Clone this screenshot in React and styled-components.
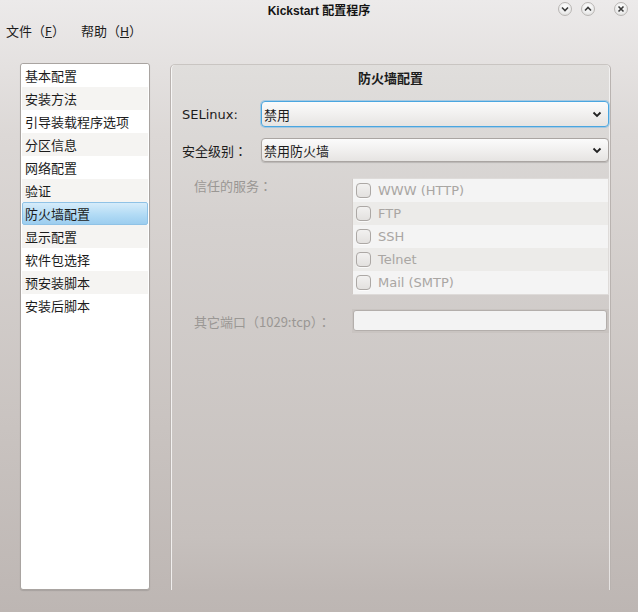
import React from 'react'
import styled, { createGlobalStyle } from 'styled-components'

const GlobalStyle = createGlobalStyle`
  html, body {
    margin: 0;
    padding: 0;
  }
  body {
    font-family: "DejaVu Sans", "Noto Sans CJK SC", sans-serif;
    font-size: 13px;
    color: #1c1c1c;
  }
`

const Window = styled.div`
  width: 638px;
  height: 612px;
  display: flex;
  flex-direction: column;
  background: linear-gradient(180deg, #eceaea 0%, #dcd8d6 22%, #c9c3c0 70%, #bdb6b3 100%);
  overflow: hidden;
`

const TitleBar = styled.div`
  height: 19px;
  display: flex;
  align-items: center;
  justify-content: center;
  position: relative;
  font-family: "Liberation Sans", "Noto Sans CJK SC", sans-serif;
  font-weight: bold;
  font-size: 12px;
  color: #141414;
`

const TitleButtons = styled.div`
  position: absolute;
  right: 10px;
  top: 2px;
  display: flex;
  gap: 9px;
`

const RoundButton = styled.div`
  width: 14px;
  height: 14px;
  border-radius: 50%;
  box-sizing: border-box;
  border: 1px solid #b9b6b4;
  background: radial-gradient(circle at 50% 35%, #ffffff 0%, #ececec 60%, #d6d4d2 100%);
  display: flex;
  align-items: center;
  justify-content: center;
  margin-left: ${p => p.$gap || 0}px;
`

const MenuBar = styled.div`
  height: 23px;
  display: flex;
  align-items: center;
  padding-left: 6px;
  gap: 16px;
`

const MenuItem = styled.div`
  font-family: "Noto Sans CJK SC", sans-serif;
  font-size: 13px;
  color: #1c1c1c;
  u {
    font-family: "DejaVu Sans", sans-serif;
    font-size: 12px;
  }
`

const Main = styled.div`
  flex: 1;
  display: flex;
  padding: 21px 27px 22px 20px;
  gap: 20px;
`

const NavList = styled.div`
  width: 130px;
  box-sizing: border-box;
  background: #ffffff;
  border: 1px solid #a9a4a1;
  border-radius: 3px;
  box-shadow: 0 1px 1px rgba(0, 0, 0, 0.12);
  display: flex;
  flex-direction: column;
  padding: 0 1px;
`

const NavItem = styled.div`
  height: 23px;
  box-sizing: border-box;
  display: flex;
  align-items: center;
  padding: 0 0 1px 3px;
  font-family: "Noto Sans CJK SC", sans-serif;
  font-size: 13px;
  background: ${p => (p.$alt ? '#f5f4f2' : '#ffffff')};
  ${p =>
    p.$active &&
    `
    background: linear-gradient(180deg, #d6ecfa 0%, #b2dbf5 55%, #9ccdef 100%);
    border: 1px solid #8fc2e6;
    border-radius: 2px;
    padding-left: 2px;
  `}
`

const Panel = styled.div`
  flex: 1;
  box-sizing: border-box;
  border-radius: 5px 5px 0 0;
  border-top: 1px solid #c9c5c2;
  border-left: 1px solid #b9b3b0;
  border-right: 1px solid #b9b3b0;
  box-shadow: inset 1px 0 0 rgba(255, 255, 255, 0.75), inset -1px 0 0 rgba(255, 255, 255, 0.6);
  background: linear-gradient(180deg, #e0dedc 0%, #d5d1cf 30%, #c6c0bd 90%, #bfb8b5 100%);
  padding: 1px 1px 0 11px;
  margin-top: 1px;
  display: flex;
  flex-direction: column;
`

const PanelTitle = styled.div`
  height: 22px;
  display: flex;
  align-items: center;
  justify-content: center;
  font-family: "Noto Sans CJK SC", sans-serif;
  font-weight: bold;
  font-size: 13px;
  padding-right: 10px;
`

const Form = styled.div`
  margin-top: 13px;
  display: flex;
  flex-direction: column;
`

const Row = styled.div`
  display: flex;
  align-items: ${p => (p.$top ? 'flex-start' : 'center')};
  margin-bottom: ${p => p.$mb || 0}px;
`

const Label = styled.div`
  width: ${p => (p.$wide ? 170 : 79)}px;
  padding-left: ${p => (p.$indent ? 12 : 0)}px;
  box-sizing: border-box;
  font-family: ${p => (p.$latin ? '"DejaVu Sans", sans-serif' : '"Noto Sans CJK SC", sans-serif')};
  font-size: 13px;
  color: ${p => (p.$disabled ? '#9a9794' : '#1c1c1c')};
  margin-top: ${p => p.$pt || 0}px;
`

/* centred full-width colon, as the original toolkit draws it */
const Colon = styled.span`
  font-family: "Noto Sans CJK JP", sans-serif;
`

const Combo = styled.div`
  flex: 1;
  height: ${p => (p.$focused ? 26 : 24)}px;
  box-sizing: border-box;
  border-radius: 4px;
  border: 1px solid ${p => (p.$focused ? '#4aa6e0' : '#aaa5a2')};
  box-shadow: ${p =>
    p.$focused ? '0 0 0 1px rgba(100, 180, 235, 0.45)' : '0 1px 1px rgba(0,0,0,0.15)'};
  background: linear-gradient(180deg, #fbfbfb 0%, #f1f0ef 50%, #e6e4e2 100%);
  display: flex;
  align-items: center;
  padding: 0 6px 0 2px;
  font-family: "Noto Sans CJK SC", sans-serif;
  font-size: 13px;
`

const ComboText = styled.span`
  flex: 1;
`

const ServiceBox = styled.div`
  flex: 1;
  box-sizing: border-box;
  border: 1px solid #dedbd9;
  border-left-color: #cfcac7;
  display: flex;
  flex-direction: column;
`

const ServiceRow = styled.div`
  height: 23px;
  display: flex;
  align-items: center;
  padding-left: 3px;
  gap: 7px;
  background: ${p => (p.$alt ? '#ecebe9' : '#f4f4f4')};
  color: #a9a6a3;
  font-family: "DejaVu Sans", sans-serif;
  font-size: 13px;
`

const CheckBox = styled.span`
  width: 15px;
  height: 15px;
  box-sizing: border-box;
  border: 1px solid #aca8a5;
  border-radius: 4px;
  background: linear-gradient(180deg, #f2f1f0 0%, #e3e1df 100%);
  box-shadow: 0 1px 0 rgba(255, 255, 255, 0.7);
`

const PortInput = styled.div`
  flex: 1;
  height: 24px;
  box-sizing: border-box;
  padding: 1px 2px 2px 1px;
  background: #c9c4c1;
  display: flex;
`

const InputField = styled.div`
  flex: 1;
  box-sizing: border-box;
  border: 1px solid #b3aeab;
  border-radius: 3px;
  background: #f3f3f3;
`

const Chevron = ({ up }) => (
  <svg width="8" height="6" viewBox="0 0 8 6">
    <path
      d={up ? 'M1 4.5 L4 1.5 L7 4.5' : 'M1 1.5 L4 4.5 L7 1.5'}
      fill="none"
      stroke="#3a3a3a"
      strokeWidth="1.6"
    />
  </svg>
)

const CloseGlyph = () => (
  <svg width="8" height="8" viewBox="0 0 8 8">
    <path d="M1.5 1.5 L6.5 6.5 M6.5 1.5 L1.5 6.5" stroke="#3a3a3a" strokeWidth="1.6" />
  </svg>
)

const ComboArrow = () => (
  <svg width="10" height="7" viewBox="0 0 10 7">
    <path d="M1.5 1.5 L5 5 L8.5 1.5" fill="none" stroke="#222" strokeWidth="1.8" />
  </svg>
)

const navItems = [
  '基本配置',
  '安装方法',
  '引导装载程序选项',
  '分区信息',
  '网络配置',
  '验证',
  '防火墙配置',
  '显示配置',
  '软件包选择',
  '预安装脚本',
  '安装后脚本',
]

const services = ['WWW (HTTP)', 'FTP', 'SSH', 'Telnet', 'Mail (SMTP)']

const App = () => {
  return (
    <>
      <GlobalStyle />
      <Window>
        <TitleBar>
          Kickstart 配置程序
          <TitleButtons>
            <RoundButton>
              <Chevron />
            </RoundButton>
            <RoundButton>
              <Chevron up />
            </RoundButton>
            <RoundButton $gap={10}>
              <CloseGlyph />
            </RoundButton>
          </TitleButtons>
        </TitleBar>
        <MenuBar>
          <MenuItem>
            文件（<u>F</u>）
          </MenuItem>
          <MenuItem>
            帮助（<u>H</u>）
          </MenuItem>
        </MenuBar>
        <Main>
          <NavList>
            {navItems.map((item, i) => (
              <NavItem key={item} $alt={i % 2 === 1} $active={item === '防火墙配置'}>
                {item}
              </NavItem>
            ))}
          </NavList>
          <Panel>
            <PanelTitle>防火墙配置</PanelTitle>
            <Form>
              <Row $mb={11}>
                <Label $latin>SELinux:</Label>
                <Combo $focused>
                  <ComboText>禁用</ComboText>
                  <ComboArrow />
                </Combo>
              </Row>
              <Row $mb={16}>
                <Label>
                  安全级别<Colon>：</Colon>
                </Label>
                <Combo>
                  <ComboText>禁用防火墙</ComboText>
                  <ComboArrow />
                </Combo>
              </Row>
              <Row $top $mb={14}>
                <Label $wide $indent $disabled $pt={-2}>
                  信任的服务<Colon>：</Colon>
                </Label>
                <ServiceBox>
                  {services.map((s, i) => (
                    <ServiceRow key={s} $alt={i % 2 === 1}>
                      <CheckBox />
                      {s}
                    </ServiceRow>
                  ))}
                </ServiceBox>
              </Row>
              <Row>
                <Label $wide $indent $disabled>
                  其它端口（1029:tcp）<Colon>：</Colon>
                </Label>
                <PortInput>
                  <InputField />
                </PortInput>
              </Row>
            </Form>
          </Panel>
        </Main>
      </Window>
    </>
  )
}

export default App
